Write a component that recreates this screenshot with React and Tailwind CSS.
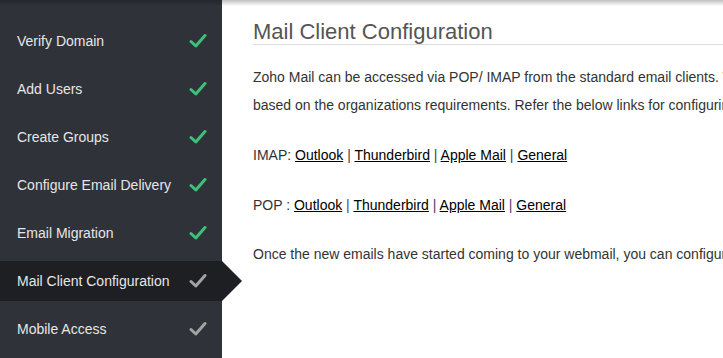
const steps = [
  { label: 'Verify Domain', done: true },
  { label: 'Add Users', done: true },
  { label: 'Create Groups', done: true },
  { label: 'Configure Email Delivery', done: true },
  { label: 'Email Migration', done: true },
  { label: 'Mail Client Configuration', done: false, active: true },
  { label: 'Mobile Access', done: false },
]

function Check({ done }) {
  return (
    <svg width="18" height="16" viewBox="0 0 18 16" className={done ? 'text-[#3dc07a]' : 'text-[#a3a3a3]'}>
      <path d="M2 8.5 L6.8 13 L16 2.5" fill="none" stroke="currentColor" strokeWidth="3" strokeLinecap="round" strokeLinejoin="round" />
    </svg>
  )
}

function LinkRow({ label, pipe }) {
  const links = ['Outlook', 'Thunderbird', 'Apple Mail', 'General']
  return (
    <p>
      {label}{' '}
      {links.map((l, i) => (
        <span key={l}>
          <a className="underline text-black">{l}</a>
          {i < links.length - 1 && <span className={pipe}> | </span>}
        </span>
      ))}
    </p>
  )
}

export default function App() {
  return (
    <div className="relative flex h-[358px] w-[723px] overflow-hidden bg-white font-['Liberation_Sans',Arial,sans-serif]">
      <div className="pointer-events-none absolute inset-x-0 top-0 z-10 h-[6px] bg-gradient-to-b from-black/25 to-transparent" />
      <aside className="w-[222px] shrink-0 bg-[#2f3239] pt-[21px]">
        <ul className="flex flex-col gap-2">
          {steps.map((s) => (
            <li
              key={s.label}
              className={`relative flex h-10 items-center justify-between pl-[17px] pr-[15px] text-[14px] text-[#e6e6e6] ${s.active ? 'bg-[#1e1f23]' : ''}`}
            >
              <span>{s.label}</span>
              <Check done={s.done} />
              {s.active && (
                <span className="absolute left-full top-0 h-0 w-0 border-y-[20px] border-l-[20px] border-y-transparent border-l-[#1e1f23]" />
              )}
            </li>
          ))}
        </ul>
      </aside>
      <main className="min-w-0 flex-1 pl-[31px] pt-[20px] text-[14px] text-[#333] whitespace-nowrap">
        <h1 className="border-b border-[#dcdcdc] pb-0 text-[22px] leading-[24px] text-[#555]">Mail Client Configuration</h1>
        <div className="mt-[18px] leading-[28px]">
          <p>Zoho Mail can be accessed via POP/ IMAP from the standard email clients. The administrator can enable or disable the access</p>
          <p>based on the organizations requirements. Refer the below links for configuring the email clients of your choice.</p>
        </div>
        <div className="mt-[22px] flex flex-col leading-[28px]">
          <LinkRow label="IMAP:" pipe="text-[#444]" />
          <div className="mt-[22px]">
            <LinkRow label="POP :" pipe="text-[#5a3d6e]" />
          </div>
          <p className="mt-[21px]">Once the new emails have started coming to your webmail, you can configure the email clients.</p>
        </div>
      </main>
    </div>
  )
}
